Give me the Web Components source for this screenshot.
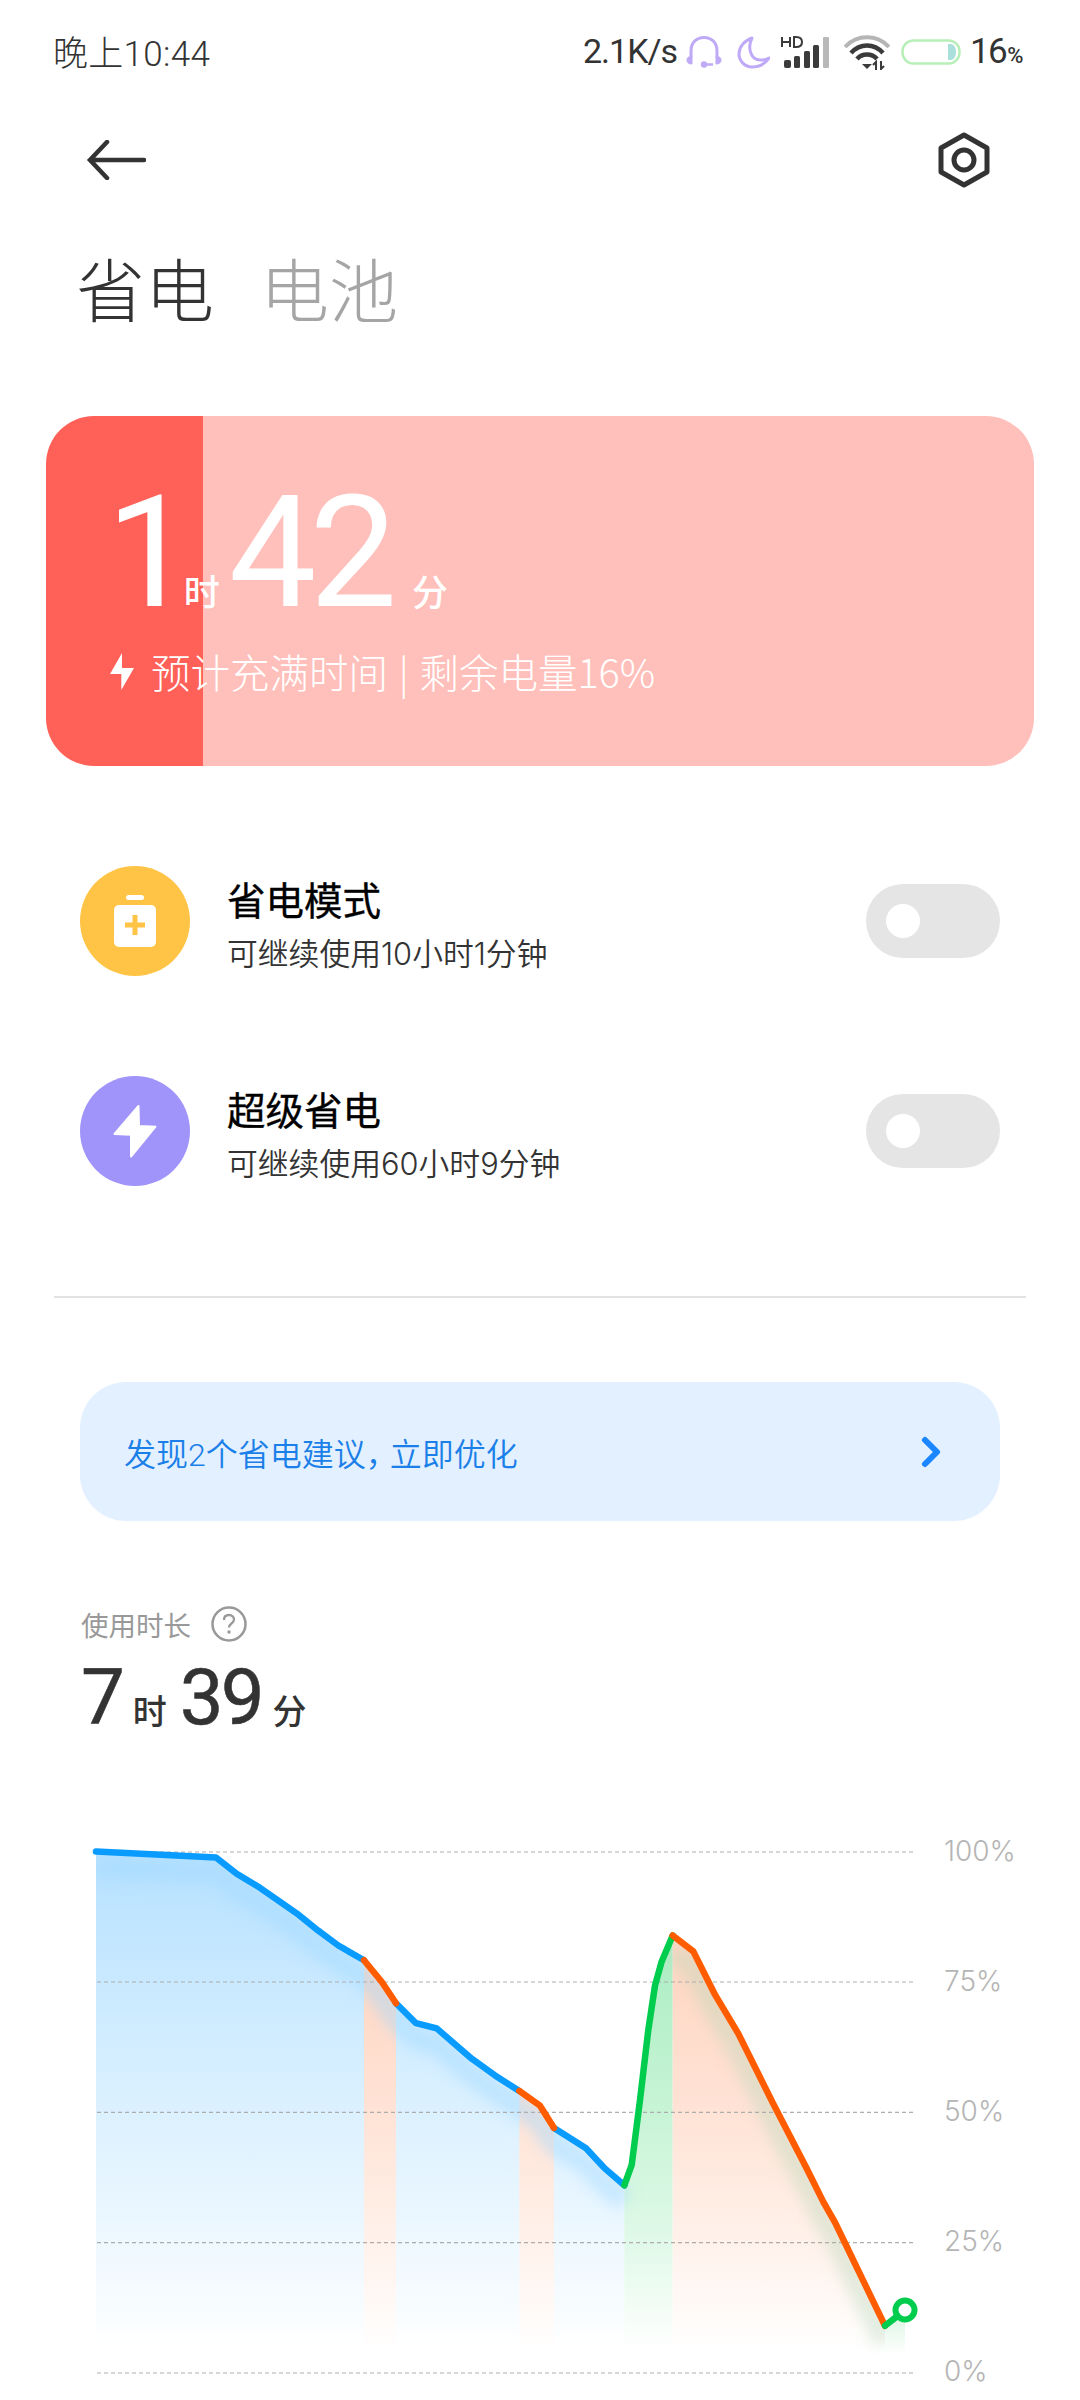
<!DOCTYPE html>
<html lang="zh"><head><meta charset="utf-8"><title>省电</title>
<style>
html,body{margin:0;padding:0;background:#fff;height:2400px;overflow:hidden}
body{font-family:Roboto,"Noto Sans CJK SC",sans-serif;color:#333}
battery-app{display:block}
</style></head>
<body>
<battery-app></battery-app>

<template id="t-app">
<style>:host{display:flex;flex-direction:column;width:1080px;height:2400px;overflow:hidden}</style>
<status-bar></status-bar>
<nav-bar></nav-bar>
<tab-title><span>省电</span><span slot="muted">电池</span></tab-title>
<charge-card></charge-card>
<div style="height:50px"></div>
<power-row><svg slot="icon" width="110" height="110" viewBox="0 0 110 110"><circle cx="55" cy="55" r="55" fill="#ffc445"/><rect x="46" y="29" width="18" height="5" rx="2.5" fill="#fff"/><rect x="34" y="39" width="42" height="42" rx="5" fill="#fff"/><path d="M55 49v20M45 59h20" stroke="#ffc445" stroke-width="5" fill="none"/></svg><span slot="title">省电模式</span><span slot="sub">可继续使用10小时1分钟</span></power-row>
<power-row><svg slot="icon" width="110" height="110" viewBox="0 0 110 110"><circle cx="55" cy="55" r="55" fill="#a094fb"/><path d="M58.5 30 34.5 58 51 58.7 51 80.5 75.500 50.700 59 50Z" fill="#fff" stroke="#fff" stroke-width="2" stroke-linejoin="round"/></svg><span slot="title">超级省电</span><span slot="sub">可继续使用60小时9分钟</span></power-row>
<div style="height:60px"></div>
<hr-line></hr-line>
<tip-banner>发现2个省电建议<span style="letter-spacing:-8px">，</span>立即优化</tip-banner>
<usage-head></usage-head>
<usage-chart></usage-chart>
</template>

<template id="t-status">
<style>
:host{display:flex;align-items:center;justify-content:space-between;height:104px;padding:0 58px 0 53px;box-sizing:border-box;font-size:35px;color:#333;font-weight:400}
.r{display:flex;align-items:center}
svg{display:block;flex:none}
.t{position:relative;top:-2px}
.p{font-size:22px;font-weight:500;margin-left:1px}
</style>
<span class="t" style="font-weight:300;letter-spacing:.3px">晚上10:44</span>
<div class="r">
<span class="t" style="width:103px;white-space:nowrap;font-size:34px;top:-1px;letter-spacing:-1px">2.1K/s</span>
<svg width="36" height="32" viewBox="0 0 36 32"><path d="M5 22V15C5 6 11 1.500 18 1.500S31 6 31 15V22" fill="none" stroke="#bfaaf7" stroke-width="3"/><path d="M1 24c0-2 1-3.500 5-3.500v7.500c-4 0-5-2-5-4ZM35 24c0-2-1-3.500-5-3.500v7.500c4 0 5-2 5-4Z" fill="#bfaaf7" stroke="#bfaaf7" stroke-width="1"/><path d="M18 28.500h9" stroke="#bfaaf7" stroke-width="2.500"/><circle cx="18" cy="28.500" r="3.200" fill="#bfaaf7"/></svg>
<svg width="33" height="33" viewBox="0 0 33 33" style="margin-left:15px"><path d="M15 2C7 5 2 11 2 18c0 7 6 13 13 13 7 0 13-3 17-9-3 2-6 2-9 2C14 24 10 12 15 2Z" fill="none" stroke="#bfaaf7" stroke-width="3" stroke-linejoin="round"/></svg>
<svg width="50" height="32" viewBox="0 0 50 32" style="margin-left:11px"><rect x="3" y="24" width="7" height="8" rx="2" fill="#3b3b3b"/><rect x="13" y="20" width="6" height="12" rx="1.500" fill="#3b3b3b"/><rect x="23" y="15" width="6" height="17" rx="1.500" fill="#3b3b3b"/><rect x="32" y="9" width="6" height="23" rx="1.500" fill="#3b3b3b"/><rect x="42" y="1" width="6" height="31" rx="1" fill="#b8b8b8"/><path d="M1 1v10M1 6h8M9 1v10M13 1v10h2c5 0 6-2 6-5s-1-5-6-5Z" fill="none" stroke="#3b3b3b" stroke-width="2"/></svg>
<svg width="46" height="35" viewBox="0 0 46 35" style="margin-left:13px"><path d="M1 12C13 -1 33 -1 45 12" fill="none" stroke="#b5b5b5" stroke-width="4"/><path d="M7 18C16 8 30 8 39 18" fill="none" stroke="#3b3b3b" stroke-width="4.500"/><path d="M13 24C18 18 28 18 33 24" fill="none" stroke="#3b3b3b" stroke-width="4.500"/><path d="M18 29h10l-5 5Z" fill="#3b3b3b"/><path d="M32 35v-8l-3 3M37 26v8l3-3" fill="none" stroke="#3b3b3b" stroke-width="2"/></svg>
<svg width="60" height="26" viewBox="0 0 60 26" style="margin-left:11px"><rect x="1.500" y="1.500" width="57" height="23" rx="11" fill="#fff" stroke="#b8efb8" stroke-width="2.500"/><path d="M47 5h3c3 0 5 4 5 8s-2 8-5 8h-3Z" fill="#a9e0dc"/></svg>
<span style="margin-left:9px;display:flex;align-items:baseline;letter-spacing:-1.500px;position:relative;top:-1px">16<span class="p">%</span></span>
</div>
</template>

<template id="t-nav">
<style>:host{display:flex;align-items:center;justify-content:space-between;height:112px;padding:0 84px 0 86px;box-sizing:border-box}svg{display:block}</style>
<svg width="60" height="40" viewBox="0 0 60 40"><path d="M58 20H5M21 2 4 20l17 18" fill="none" stroke="#333" stroke-width="4.500" stroke-linecap="round" stroke-linejoin="miter"/></svg>
<svg width="52" height="56" viewBox="0 0 52 56" style="margin-right:6px"><path d="M26 3 49 16V40L26 53 3 40V16Z" fill="none" stroke="#333" stroke-width="5" stroke-linejoin="round"/><circle cx="26" cy="28" r="10" fill="none" stroke="#333" stroke-width="5"/></svg>
</template>

<template id="t-title">
<style>:host{display:flex;gap:46px;height:200px;padding:31px 0 0 76px;box-sizing:border-box;font-size:69px;line-height:80px;font-weight:200;color:#333;font-family:"Noto Sans CJK SC",sans-serif}
.m{color:#a5a5a5}</style>
<slot></slot><span class="m"><slot name="muted"></slot></span>
</template>

<template id="t-card">
<style>:host{display:block;margin:0 46px;height:350px;border-radius:48px;background:linear-gradient(90deg,#ff6058 157px,#ffbfba 157px);color:#fff;box-sizing:border-box;padding:58px 0 0 60px;overflow:hidden}
.time{display:flex;align-items:baseline;height:158px;line-height:158px}
.n{font:400 156px/158px Roboto,sans-serif;letter-spacing:-7px}
.u{font:500 36px/36px "Noto Sans CJK SC",sans-serif}
.row{display:flex;align-items:center;margin-top:14px;margin-left:4px;font:300 39.500px/50px "Noto Sans CJK SC",sans-serif;white-space:nowrap;word-spacing:2px}
svg{display:block;margin-right:17px}
</style>
<div class="time"><span class="n">1</span><span class="u" style="margin-left:-3px">时</span><span class="n" style="margin-left:9px">42</span><span class="u" style="margin-left:22px">分</span></div>
<div class="row"><svg width="24" height="37" viewBox="0 0 24 37"><path d="M12 0 0 21H11.300V37L24 15H12Z" fill="#fff"/></svg><span>预计充满时间 | 剩余电量16%</span></div>
</template>

<template id="t-row">
<style>:host{display:flex;align-items:center;height:210px;padding:0 80px;box-sizing:border-box}
.txt{flex:1;margin-left:37px;display:flex;flex-direction:column;font-family:Inter,"Noto Sans CJK SC",sans-serif;position:relative;top:6px}
.a{font-size:38.500px;line-height:46px;font-weight:400;color:#000;-webkit-text-stroke:.35px #000}
.b{font-size:30.800px;line-height:44px;color:#333;margin-top:8px;font-weight:350}
.sw{width:134px;height:74px;border-radius:37px;background:#e5e5e5;display:flex;align-items:center;padding-left:20px;box-sizing:border-box}
.k{width:34px;height:34px;border-radius:50%;background:#fff}
::slotted(svg){display:block}
</style>
<slot name="icon"></slot>
<div class="txt"><span class="a"><slot name="title"></slot></span><span class="b"><slot name="sub"></slot></span></div>
<div class="sw"><div class="k"></div></div>
</template>

<template id="t-hr"><style>:host{display:block;height:2px;margin:0 54px;background:#e2e2e2}</style></template>

<template id="t-banner">
<style>:host{display:flex;align-items:center;justify-content:space-between;margin:84px 80px 0;height:139px;border-radius:46px;background:#e3f0ff;padding:0 58px 0 44px;box-sizing:border-box;font:350 32px Roboto,"Noto Sans CJK SC",sans-serif;color:#1a7fe8}
svg{display:block}</style>
<span><slot></slot></span>
<svg width="24" height="34" viewBox="0 0 24 34"><path d="M7 5 19 17 7 29" fill="none" stroke="#1a86ff" stroke-width="6" stroke-linecap="round" stroke-linejoin="round"/></svg>
</template>

<template id="t-head">
<style>:host{display:block;margin:82px 0 0 81px;height:217px}
.l{display:flex;align-items:center;gap:20px;height:44px;margin-top:-1px;font:400 27.500px "Noto Sans CJK SC",sans-serif;color:#999}
.v{display:flex;align-items:baseline;height:90px;line-height:90px;color:#333;margin-top:7px}
.n{font:400 78px/90px Roboto,sans-serif;-webkit-text-stroke:.5px #333}
.u{font:500 34px/34px "Noto Sans CJK SC",sans-serif}
svg{display:block}</style>
<div class="l"><span>使用时长</span><svg width="36" height="36" viewBox="0 0 36 36"><circle cx="18" cy="18" r="16.500" fill="none" stroke="#999" stroke-width="2.500"/><path d="M13 14c0-3 2-5 5-5s5 2 5 4.500c0 4-5 4-5 8" fill="none" stroke="#999" stroke-width="2.300"/><circle cx="18" cy="26" r="1.700" fill="#999"/></svg></div>
<div class="v"><span class="n">7</span><span class="u" style="margin-left:8px">时</span><span class="n" style="margin-left:13px;letter-spacing:-3px">39</span><span class="u" style="margin-left:11px">分</span></div>
</template>

<template id="t-chart">
<style>:host{display:flex;width:1080px;height:580px}
svg{display:block;flex:none}
.ax{display:flex;flex-direction:column;justify-content:space-between;height:560px;margin-top:12px;margin-left:-2px;font:300 28px/40px Inter,Lato,sans-serif;color:#b5b5b5}
</style>
<svg width="946" height="580" viewBox="0 1820 946 580">
<defs>
<linearGradient id="gb" gradientUnits="userSpaceOnUse" x1="0" y1="1853" x2="0" y2="2345"><stop offset="0" stop-color="#b6e1ff"/><stop offset=".53" stop-color="#dcf1ff"/><stop offset=".79" stop-color="#eef8ff"/><stop offset=".96" stop-color="#fafdff"/><stop offset="1" stop-color="#fff"/></linearGradient>
<linearGradient id="go" gradientUnits="userSpaceOnUse" x1="0" y1="1980" x2="0" y2="2352"><stop offset="0" stop-color="#ffd8c5"/><stop offset=".36" stop-color="#ffe3d6"/><stop offset=".7" stop-color="#fff1ea"/><stop offset="1" stop-color="#fff"/></linearGradient>
<linearGradient id="gg" gradientUnits="userSpaceOnUse" x1="0" y1="1960" x2="0" y2="2352"><stop offset="0" stop-color="#aeeec5"/><stop offset=".4" stop-color="#c8f4d6"/><stop offset=".72" stop-color="#e0f9e8"/><stop offset="1" stop-color="#fff"/></linearGradient>
<linearGradient id="ge" gradientUnits="userSpaceOnUse" x1="0" y1="2315" x2="0" y2="2356"><stop offset="0" stop-color="#dcf5e4"/><stop offset="1" stop-color="#fff"/></linearGradient>
<clipPath id="under"><path data-k="clip"/></clipPath>
<filter id="bl" x="-10%" y="-10%" width="120%" height="120%"><feGaussianBlur stdDeviation="7"/></filter>
</defs>
<path data-k="fb" fill="url(#gb)"/>
<path data-k="fo1" fill="url(#go)"/>
<path data-k="fo2" fill="url(#go)"/>
<path data-k="fg" fill="url(#gg)"/>
<path data-k="fo3" fill="url(#go)"/>
<path data-k="fe" fill="url(#ge)"/>
<g clip-path="url(#under)"><g filter="url(#bl)" fill="none" stroke-width="22">
<path data-k="sb" transform="translate(0 16)" stroke="#9fd9ff" stroke-opacity=".45"/>
<path data-k="so" transform="translate(0 16)" stroke="#b8d8b8" stroke-opacity=".4"/>
</g></g>
<g stroke="#adadad" stroke-width="1.200" stroke-dasharray="4 3"><path d="M97 1853H914M97 1983H914M97 2113.300H914M97 2243.600H914M97 2374H914"/></g>
<g fill="none" stroke-width="6.500" stroke-linejoin="round" stroke-linecap="round">
<path data-k="b1" stroke="#0a9bff"/><path data-k="b2" stroke="#0a9bff"/><path data-k="b3" stroke="#0a9bff"/>
<path data-k="o1" stroke="#ff5c00"/><path data-k="o2" stroke="#ff5c00"/>
<path data-k="g1" stroke="#00cc4d"/><path data-k="o3" stroke="#ff5c00"/><path data-k="g2" stroke="#00cc4d"/>
</g>
<circle cx="905" cy="2311" r="9.500" fill="#fff" stroke="#00cc4d" stroke-width="6"/>
</svg>
<div class="ax"><span>100%</span><span>75%</span><span>50%</span><span>25%</span><span>0%</span></div>
</template>

<script>
const mk=(name,tid,init)=>customElements.define(name,class extends HTMLElement{
  constructor(){super();const r=this.attachShadow({mode:"open"});r.appendChild(document.getElementById(tid).content.cloneNode(true));if(init)init(r);}
});
const Y=y=>+(y/2.703+1820).toFixed(1);
const L=(a,o)=>a.map(p=>[+(p[0]/3+o).toFixed(1),Y(p[1])]);
const S={
 b1:L([[108,88],[468,104],[530,148],[600,186],[710,255],[775,302],[835,342],[912,382]],60),
 o1:L([[912,382],[965,440],[1008,498]],60),
 b2:L([[1008,498],[1068,552],[1130,566],[1235,648],[1305,693],[1378,735]],60),
 o2:L([[1378,735],[1440,775],[1482,835]],60),
 b3:L([[1482,835]],60).concat(L([[78,890],[135,945],[193,990]],560)),
 g1:L([[193,990],[215,935],[240,760],[265,570],[285,450],[305,385],[338,315]],560),
 o3:L([[338,315],[400,358],[465,475],[535,580],[640,770],[740,945],[790,1035],[825,1090],[975,1370]],560),
 g2:L([[975,1370],[1010,1345]],560)
};
const D=p=>"M"+p.map(q=>q.join(" ")).join(" ");
const J=(...a)=>a.reduce((acc,s)=>acc.concat(acc.length?s.slice(1):s),[]);
const BOT=2352;
const area=(p,b)=>D(p)+"V"+b+"H"+p[0][0]+"Z";
function chart(r){
  const all=J(S.b1,S.o1,S.b2,S.o2,S.b3,S.g1,S.o3);
  const set=(k,d)=>r.querySelector('[data-k="'+k+'"]').setAttribute("d",d);
  for(const k of Object.keys(S)) set(k,D(S[k]));
  set("clip",area(all,2380));
  set("fb",area(J(S.b1,S.o1,S.b2,S.o2,S.b3),2345));
  set("fo1",area(S.o1,BOT));set("fo2",area(S.o2,BOT));
  set("fg",area(S.g1,BOT));set("fo3",area(S.o3,BOT));
  set("fe",area([S.g2[0],[905,2311]],2356));
  set("sb",D(J(S.b1,S.o1,S.b2,S.o2,S.b3)));set("so",D(S.o3));
}
[["status-bar","t-status"],["nav-bar","t-nav"],["tab-title","t-title"],["charge-card","t-card"],["power-row","t-row"],["hr-line","t-hr"],["tip-banner","t-banner"],["usage-head","t-head"],["usage-chart","t-chart",chart],["battery-app","t-app"]].forEach(a=>mk(...a));
</script>
</body></html>
